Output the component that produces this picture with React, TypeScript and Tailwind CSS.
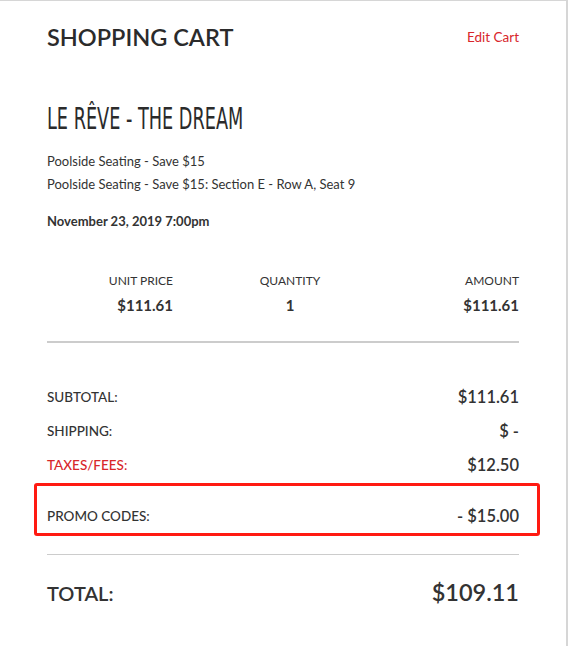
import React from "react";

const lato = { fontFamily: "Lato, 'Open Sans', sans-serif" };

export default function App() {
  return (
    <div className="w-[570px] h-[646px] bg-white" style={lato}>
      <div className="w-[568px] h-[646px] border-t border-r-2 border-[#d6d6d6] text-[#333]">
        <div className="pl-[47px] pr-[47px]">
          <div className="flex items-center justify-between pt-[22px] h-[52px]">
            <h1 className="text-[23.5px] font-semibold leading-none text-[#2b2b2b]">SHOPPING CART</h1>
            <a className="text-[13.5px] text-[#d8262b] leading-none">Edit Cart</a>
          </div>
          <h2
            className="mt-[51px] h-[30px] text-[30px] leading-none text-[#2b2b2b] whitespace-nowrap"
            style={{ fontFamily: "'Liberation Sans Narrow', 'DejaVu Sans Condensed', sans-serif" }}
          >
            <span className="inline-block origin-left scale-x-[0.655]">LE RÊVE - THE DREAM</span>
          </h2>
          <div className="mt-[16px] text-[13px] leading-[23px] text-[#333]">
            <div>Poolside Seating - Save $15</div>
            <div>Poolside Seating - Save $15: Section E - Row A, Seat 9</div>
          </div>
          <div className="mt-[14px] text-[13px] font-bold leading-[23px]">November 23, 2019 7:00pm</div>

          <div className="mt-[41px] grid grid-cols-[126px_1fr_126px] text-[#333]">
            <div className="text-right text-[12px] leading-[14px]">UNIT PRICE</div>
            <div className="text-center text-[12px] leading-[14px] pl-[14px]">QUANTITY</div>
            <div className="text-right text-[12px] leading-[14px]">AMOUNT</div>
            <div className="text-right text-[15px] font-bold leading-[20px] mt-[7px]">$111.61</div>
            <div className="text-center text-[15px] font-bold leading-[20px] mt-[7px] pl-[14px]">1</div>
            <div className="text-right text-[15px] font-bold leading-[20px] mt-[7px]">$111.61</div>
          </div>

          <div className="mt-[26px] h-[2px] bg-[#cccccc]" />

          <div className="mt-[44px] flex flex-col gap-[14px]">
            <div className="flex items-center justify-between h-[20px]">
              <span className="text-[13.5px] font-medium">SUBTOTAL:</span>
              <span className="text-[16.5px] font-semibold">$111.61</span>
            </div>
            <div className="flex items-center justify-between h-[20px]">
              <span className="text-[13.5px] font-medium">SHIPPING:</span>
              <span className="text-[16.5px] font-semibold">$ -</span>
            </div>
            <div className="flex items-center justify-between h-[20px]">
              <span className="text-[13.5px] font-medium text-[#d8262b]">TAXES/FEES:</span>
              <span className="text-[16.5px] font-semibold">$12.50</span>
            </div>
          </div>
        </div>

        <div className="ml-[34px] mr-[26px] mt-[8px] h-[53px] border-[3px] border-[#ff1a12] rounded-[3px] pl-[10px] pr-[18px] pt-[20px]">
          <div className="flex items-center justify-between h-[20px]">
            <span className="text-[13.5px] font-medium">PROMO CODES:</span>
            <span className="text-[16.5px] font-semibold">- $15.00</span>
          </div>
        </div>

        <div className="pl-[47px] pr-[47px]">
          <div className="mt-[18px] h-px bg-[#cccccc]" />
          <div className="mt-[25px] flex items-center justify-between h-[26px]">
            <span className="text-[20px] font-semibold">TOTAL:</span>
            <span className="text-[23.5px] font-semibold">$109.11</span>
          </div>
        </div>
      </div>
    </div>
  );
}
